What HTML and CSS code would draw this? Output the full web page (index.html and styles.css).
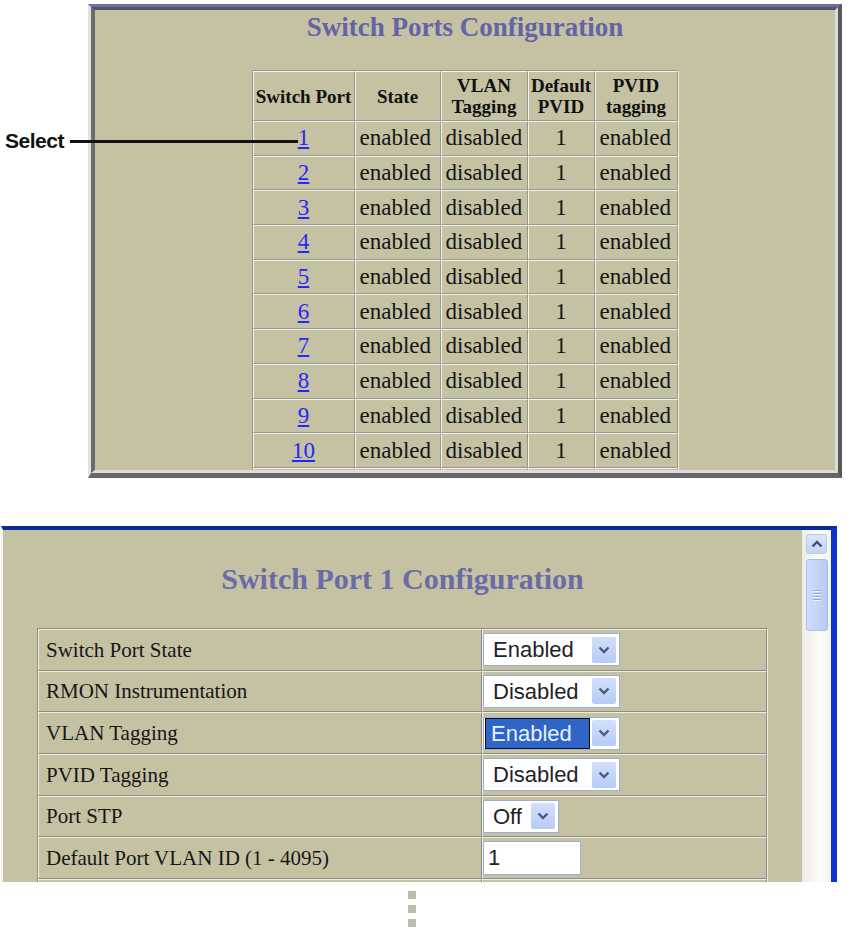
FILE: index.html
```html
<!DOCTYPE html>
<html>
<head>
<meta charset="utf-8">
<title>Switch Ports Configuration</title>
<link rel="stylesheet" href="styles.css">
</head>
<body>
<div class="fig1">
  <div class="callout"><span class="callout-label">Select</span><span class="callout-line"></span></div>
  <div class="panel">
    <div class="panel-body">
      <h1 class="title1">Switch Ports Configuration</h1>
      <table class="ports">
        <thead>
          <tr><th class="w-port">Switch Port</th><th class="w-state">State</th><th class="w-vlan">VLAN<br>Tagging</th><th class="w-pvid">Default<br>PVID</th><th class="w-ptag">PVID<br>tagging</th></tr>
        </thead>
        <tbody>
          <tr><td class="ctr"><a href="#">1</a></td><td>enabled</td><td>disabled</td><td class="ctr">1</td><td>enabled</td></tr>
          <tr><td class="ctr"><a href="#">2</a></td><td>enabled</td><td>disabled</td><td class="ctr">1</td><td>enabled</td></tr>
          <tr><td class="ctr"><a href="#">3</a></td><td>enabled</td><td>disabled</td><td class="ctr">1</td><td>enabled</td></tr>
          <tr><td class="ctr"><a href="#">4</a></td><td>enabled</td><td>disabled</td><td class="ctr">1</td><td>enabled</td></tr>
          <tr><td class="ctr"><a href="#">5</a></td><td>enabled</td><td>disabled</td><td class="ctr">1</td><td>enabled</td></tr>
          <tr><td class="ctr"><a href="#">6</a></td><td>enabled</td><td>disabled</td><td class="ctr">1</td><td>enabled</td></tr>
          <tr><td class="ctr"><a href="#">7</a></td><td>enabled</td><td>disabled</td><td class="ctr">1</td><td>enabled</td></tr>
          <tr><td class="ctr"><a href="#">8</a></td><td>enabled</td><td>disabled</td><td class="ctr">1</td><td>enabled</td></tr>
          <tr><td class="ctr"><a href="#">9</a></td><td>enabled</td><td>disabled</td><td class="ctr">1</td><td>enabled</td></tr>
          <tr><td class="ctr"><a href="#">10</a></td><td>enabled</td><td>disabled</td><td class="ctr">1</td><td>enabled</td></tr>
          <tr><td></td><td></td><td></td><td></td><td></td></tr>
        </tbody>
      </table>
    </div>
  </div>
</div>

<div class="window">
  <div class="win-main">
    <h1 class="title2">Switch Port 1 Configuration</h1>
    <table class="cfg">
      <tr>
        <td class="lbl">Switch Port State</td>
        <td class="val"><div class="sel sel-wide"><span class="sel-val">Enabled</span><span class="sel-btn"><svg width="12" height="8" viewBox="0 0 12 8"><polyline points="1.5,1.5 6,6 10.5,1.5" fill="none" stroke="#4a5a7e" stroke-width="2.4"/></svg></span></div></td>
      </tr>
      <tr>
        <td class="lbl">RMON Instrumentation</td>
        <td class="val"><div class="sel sel-wide"><span class="sel-val">Disabled</span><span class="sel-btn"><svg width="12" height="8" viewBox="0 0 12 8"><polyline points="1.5,1.5 6,6 10.5,1.5" fill="none" stroke="#4a5a7e" stroke-width="2.4"/></svg></span></div></td>
      </tr>
      <tr>
        <td class="lbl">VLAN Tagging</td>
        <td class="val"><div class="sel sel-wide"><span class="sel-val hl">Enabled</span><span class="sel-btn"><svg width="12" height="8" viewBox="0 0 12 8"><polyline points="1.5,1.5 6,6 10.5,1.5" fill="none" stroke="#4a5a7e" stroke-width="2.4"/></svg></span></div></td>
      </tr>
      <tr>
        <td class="lbl">PVID Tagging</td>
        <td class="val"><div class="sel sel-wide"><span class="sel-val">Disabled</span><span class="sel-btn"><svg width="12" height="8" viewBox="0 0 12 8"><polyline points="1.5,1.5 6,6 10.5,1.5" fill="none" stroke="#4a5a7e" stroke-width="2.4"/></svg></span></div></td>
      </tr>
      <tr>
        <td class="lbl">Port STP</td>
        <td class="val"><div class="sel sel-narrow"><span class="sel-val">Off</span><span class="sel-btn"><svg width="12" height="8" viewBox="0 0 12 8"><polyline points="1.5,1.5 6,6 10.5,1.5" fill="none" stroke="#4a5a7e" stroke-width="2.4"/></svg></span></div></td>
      </tr>
      <tr>
        <td class="lbl">Default Port VLAN ID (1 - 4095)</td>
        <td class="val"><input class="txt" type="text" value="1"></td>
      </tr>
      <tr>
        <td class="lbl"></td>
        <td class="val"><div class="sel sel-cut"></div></td>
      </tr>
    </table>
  </div>
  <div class="vscroll">
    <div class="sb-up"><svg width="12" height="8" viewBox="0 0 12 8"><polyline points="1.5,6.5 6,2 10.5,6.5" fill="none" stroke="#3f4e72" stroke-width="2.4"/></svg></div>
    <div class="sb-thumb"><span class="sb-grip"></span><span class="sb-grip"></span><span class="sb-grip"></span><span class="sb-grip"></span></div>
  </div>
</div>

<div class="dots"><span class="dot"></span><span class="dot"></span><span class="dot"></span></div>
</body>
</html>
```

FILE: styles.css
```css
* { box-sizing: border-box; }

body {
  margin: 0;
  background: #ffffff;
  font-family: "Liberation Serif", "Times New Roman", serif;
  color: #151515;
}

/* ---------- Figure 1 ---------- */
.fig1 {
  position: relative;
  padding-top: 4px;
  height: 478px;
}

.callout {
  position: absolute;
  left: 5px;
  top: 129px;
  display: flex;
  align-items: center;
  gap: 6px;
  z-index: 2;
}

.callout-label {
  font-family: "Liberation Sans", Arial, sans-serif;
  font-weight: bold;
  font-size: 21px;
  line-height: 24px;
  letter-spacing: -0.5px;
  color: #111111;
}

.callout-line {
  width: 228px;
  height: 3px;
  background: #111111;
}

.panel {
  margin-left: 88px;
  width: 754px;
  height: 474px;
  border-style: solid;
  border-width: 3px 4px 5px 3px;
  border-color: #6e6ea8 #585858 #676767 #e2e2e2;
}

.panel-body {
  height: 100%;
  border-style: solid;
  border-width: 3px 3px 3px 4px;
  border-color: #55555c #dadada #dcdcdc #6c6c6c;
  background: #c5c2a3;
  overflow: hidden;
  padding-top: 2px;
}

.title1 {
  margin: 0;
  text-align: center;
  font-size: 27px;
  line-height: 30px;
  font-weight: bold;
  color: #6363a6;
}

.ports {
  margin: 28px auto 0;
  width: 427px;
  table-layout: fixed;
  border-collapse: separate;
  border-spacing: 0;
  border: 1px solid;
  border-color: #9a988c #f2f1ea #f2f1ea #9a988c;
}

.ports th,
.ports td {
  border: 1px solid;
  border-color: #f2f1ea #9a988c #9a988c #f2f1ea;
  padding: 0 0 0 4px;
  height: 34.7px;
  font-size: 23px;
  line-height: 26px;
  font-weight: normal;
  text-align: left;
  vertical-align: middle;
  white-space: nowrap;
  color: #161616;
}

.ports th {
  height: 50px;
  padding: 0;
  font-size: 19px;
  line-height: 21px;
  font-weight: bold;
  text-align: center;
  color: #111111;
}

.ports td.ctr { text-align: center; padding: 0; }

.ports a { color: #2626ff; text-decoration: underline; }

.w-port { width: 102px; }
.w-state { width: 86px; }
.w-vlan { width: 87px; }
.w-pvid { width: 67px; }
.w-ptag { width: 83px; }

/* ---------- Figure 2 ---------- */
.window {
  margin: 48px 0 0 1px;
  width: 836px;
  height: 356px;
  display: flex;
  border-top: 4px solid #0b2a95;
  border-left: 2px solid #f3f3ee;
  border-right: 6px solid #0b34cf;
  overflow: hidden;
}

.win-main {
  flex: none;
  width: 799px;
  height: 100%;
  background: #c5c2a3;
  overflow: hidden;
  padding-top: 32px;
}

.title2 {
  margin: 0;
  text-align: center;
  font-size: 30px;
  line-height: 34px;
  font-weight: bold;
  color: #6b6ba8;
}

.cfg {
  margin: 32px auto 0;
  width: 731px;
  table-layout: fixed;
  border-collapse: separate;
  border-spacing: 0;
  border: 1px solid;
  border-color: #8f8d80 #efeee4 #efeee4 #8f8d80;
}

.cfg td {
  height: 41.67px;
  border: 1px solid;
  border-color: #efeee4 #8f8d80 #8f8d80 #efeee4;
  padding: 0;
  vertical-align: middle;
  font-size: 21px;
  line-height: 24px;
  color: #161616;
  white-space: nowrap;
}

.cfg td.lbl { width: 444px; padding-left: 7px; }
.cfg td.val { width: 285px; }

.sel {
  display: flex;
  align-items: center;
  height: 33px;
  border: 1px solid #9ab0d3;
  background: #ffffff;
  padding-right: 3px;
  font-family: "Liberation Sans", Arial, sans-serif;
  font-size: 22px;
  color: #231f2a;
}

.sel-wide { width: 137px; }
.sel-narrow { width: 76px; }
.sel-cut { width: 151px; margin-top: 2px; }

.sel-val {
  flex: 1;
  padding-left: 9px;
  line-height: 31px;
}

.sel-val.hl {
  align-self: stretch;
  margin: 0 2px 0 1px;
  padding-left: 5px;
  background: #2f65c7;
  border: 1px solid #121214;
  color: #e9efff;
  line-height: 29px;
}

.sel-btn {
  flex: none;
  width: 24px;
  height: 26px;
  border-radius: 2px;
  background: linear-gradient(#d3dffb, #b7cbf6);
  display: flex;
  align-items: center;
  justify-content: center;
}

.txt {
  display: block;
  width: 98px;
  height: 34px;
  margin: 0;
  border: 1px solid #9ab0d3;
  background: #ffffff;
  padding: 0 0 0 4px;
  font-family: "Liberation Sans", Arial, sans-serif;
  font-size: 22px;
  color: #222222;
  outline: none;
}

.vscroll {
  flex: none;
  width: 29px;
  height: 100%;
  background: linear-gradient(to right, #ecebe3, #fcfcfa 60%, #f3f3ee);
  padding: 4px 0 0 4px;
  display: flex;
  flex-direction: column;
}

.sb-up {
  width: 21px;
  height: 20px;
  border: 1px solid #b7c9ef;
  border-radius: 3px;
  background: linear-gradient(#dde6fb, #c3d3f8);
  display: flex;
  align-items: center;
  justify-content: center;
}

.sb-thumb {
  margin-top: 5px;
  width: 22px;
  height: 72px;
  border: 1px solid #a9bdee;
  border-radius: 3px;
  background: linear-gradient(to right, #d0ddfb, #c4d4f9 50%, #b9cbf5);
  display: flex;
  flex-direction: column;
  align-items: center;
  justify-content: center;
  gap: 2px;
}

.sb-grip {
  width: 8px;
  height: 1px;
  background: #90aae7;
  box-shadow: 0 1px 0 #eef3ff;
}

.dots {
  margin: 9px 0 0 408px;
  display: flex;
  flex-direction: column;
  gap: 6px;
}

.dot {
  width: 8px;
  height: 8px;
  background: #bdbcad;
}
```
